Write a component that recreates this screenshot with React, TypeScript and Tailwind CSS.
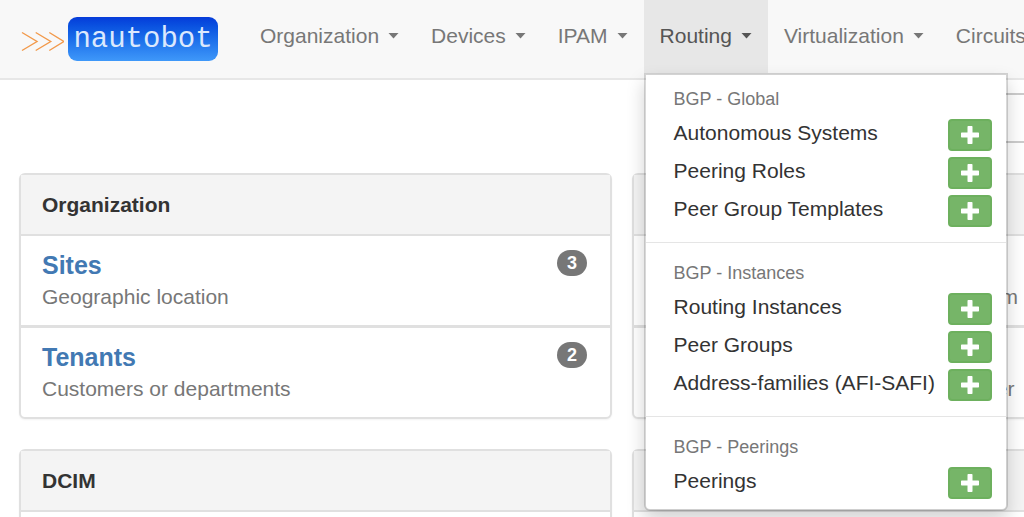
import { useState } from "react";

const navItems = ["Organization", "Devices", "IPAM", "Routing", "Virtualization", "Circuits"];

const routingMenu = [
  {
    title: "BGP - Global",
    items: ["Autonomous Systems", "Peering Roles", "Peer Group Templates"],
  },
  {
    title: "BGP - Instances",
    items: ["Routing Instances", "Peer Groups", "Address-families (AFI-SAFI)"],
  },
  { title: "BGP - Peerings", items: ["Peerings"] },
];

type Entry = { name: string; description: string; count: number };
type PanelData = { title: string; entries: Entry[] };

const columns: PanelData[][] = [
  [
    {
      title: "Organization",
      entries: [
        { name: "Sites", description: "Geographic location", count: 3 },
        { name: "Tenants", description: "Customers or departments", count: 2 },
      ],
    },
    {
      title: "DCIM",
      entries: [{ name: "Racks", description: "Equipment racks, optionally organized by group", count: 0 }],
    },
  ],
  [
    {
      title: "Power",
      entries: [
        { name: "Power Feeds", description: "Electrical circuits delivering power from panels", count: 0 },
        { name: "Power Panels", description: "Electrical panels receiving utility power", count: 0 },
      ],
    },
    {
      title: "IPAM",
      entries: [{ name: "VRFs", description: "Virtual routing and forwarding tables", count: 0 }],
    },
  ],
];

function Caret() {
  return (
    <svg width="11" height="6" viewBox="0 0 11 6" fill="currentColor" aria-hidden="true">
      <path d="M.5 0h10L5.500 5.500z" />
    </svg>
  );
}

function Logo() {
  return (
    <a href="#" aria-label="Nautobot home" className="mt-[17px] flex shrink-0 items-center gap-1">
      <svg width="44" height="44" viewBox="0 0 44 44" fill="none" stroke="#f2994a" strokeWidth="1.4" aria-hidden="true">
        <path d="M2 15.500l15 9-15 9M15.700 15.500l15 9-15 9M29.300 15.500l14.500 9-14.500 9" />
      </svg>
      <span className="flex h-11 w-[150px] items-center justify-center rounded-[9px] bg-linear-to-b from-[#073bd9] to-[#3f98f9] font-['Liberation_Mono',monospace] text-[29px] leading-none text-[#dbe8fd]">
        nautobot
      </span>
    </a>
  );
}

function RoutingMenu() {
  return (
    <div className="absolute top-full left-0 z-20 w-[364px] rounded-b-md border-2 border-black/15 bg-white bg-clip-padding pt-2 pb-[9px] shadow-[0_9px_18px_rgba(0,0,0,0.175)]">
      {routingMenu.map((section, i) => (
        <section key={section.title}>
          {i > 0 && <hr className="my-[14px] border-[#e5e5e5]" />}
          <h6 className="pt-[2px] pl-7 text-[18px] leading-[29px] text-[#777]">{section.title}</h6>
          <ul>
            {section.items.map((item) => (
              <li key={item} className="flex h-[38px] items-end justify-between pr-[14px] pb-px pl-7">
                <a href="#" className="leading-[36px] text-[#333]">
                  {item}
                </a>
                <button
                  type="button"
                  aria-label={`Add ${item}`}
                  className="flex h-8 w-11 items-center justify-center rounded-[4px] border-2 border-[#6db05e] bg-[#76b568] text-white"
                >
                  <svg width="18" height="18" viewBox="0 0 18 18" fill="currentColor" aria-hidden="true">
                    <path d="M7.200 0h3.600q.7 0 .7.700v5.800h5.800q.7 0 .7.700v3.600q0 .7-.7.700h-5.800v5.800q0 .7-.7.700H7.200q-.7 0-.7-.7v-5.800H.7q-.7 0-.7-.7V7.200q0-.7.7-.7h5.800V.7q0-.7.7-.7z" />
                  </svg>
                </button>
              </li>
            ))}
          </ul>
        </section>
      ))}
    </div>
  );
}

function Panel({ title, entries }: PanelData) {
  return (
    <section className="rounded-md border-2 border-[#e0e0e0] bg-white shadow-[0_1px_2px_rgba(0,0,0,0.05)]">
      <h2 className="border-b-2 border-[#e0e0e0] bg-[#f4f4f4] px-[21px] font-bold leading-[59px] text-[#333]">{title}</h2>
      <ul className="divide-y-3 divide-[#e0e0e0]">
        {entries.map((entry) => (
          <li key={entry.name} className="flex items-start justify-between pt-[14px] pr-[23px] pb-[13px] pl-[21px]">
            <div className="whitespace-nowrap leading-[31px]">
              <h4 className="text-[25px] leading-[31px] font-bold text-[#4279b3]">
                <a href="#">{entry.name}</a>
              </h4>
              <p className="text-[#777]">{entry.description}</p>
            </div>
            <span className="flex h-[26px] w-[30px] items-center justify-center rounded-full bg-[#777] text-[18px] font-bold text-white">
              {entry.count}
            </span>
          </li>
        ))}
      </ul>
    </section>
  );
}

export default function App() {
  const [open, setOpen] = useState<string | null>("Routing");

  return (
    <div className="h-screen overflow-hidden bg-white font-['Liberation_Sans',Arial,sans-serif] text-[21px]">
      <header className="h-20 border-b-2 border-[#e7e7e7] bg-[#f8f8f8]">
        <nav aria-label="Main navigation" className="flex items-start gap-[26px] pl-5">
          <Logo />
          <ul className="flex whitespace-nowrap">
            {navItems.map((item) => (
              <li key={item} className="relative">
                <button
                  type="button"
                  aria-expanded={open === item}
                  onClick={() => setOpen(open === item ? null : item)}
                  className={`flex h-[73px] items-center gap-[9px] px-4 pb-[2px] ${
                    open === item ? "bg-[#e7e7e7] text-[#555]" : "text-[#777]"
                  }`}
                >
                  {item}
                  <Caret />
                </button>
                {item === "Routing" && open === item && <RoutingMenu />}
              </li>
            ))}
          </ul>
        </nav>
      </header>

      <main className="pt-[13px] pl-[19px]">
        <form role="search" className="flex justify-end">
          <input
            type="search"
            aria-label="Search"
            className="-mr-2 h-[50px] w-1/3 border-2 border-[#ccc] bg-white px-4"
          />
        </form>

        <div className="mt-[30px] flex gap-5">
          {columns.map((panels, i) => (
            <div key={i} className="flex w-[59%] shrink-0 flex-col gap-[30px]">
              {panels.map((panel) => (
                <Panel key={panel.title} {...panel} />
              ))}
            </div>
          ))}
        </div>
      </main>
    </div>
  );
}
